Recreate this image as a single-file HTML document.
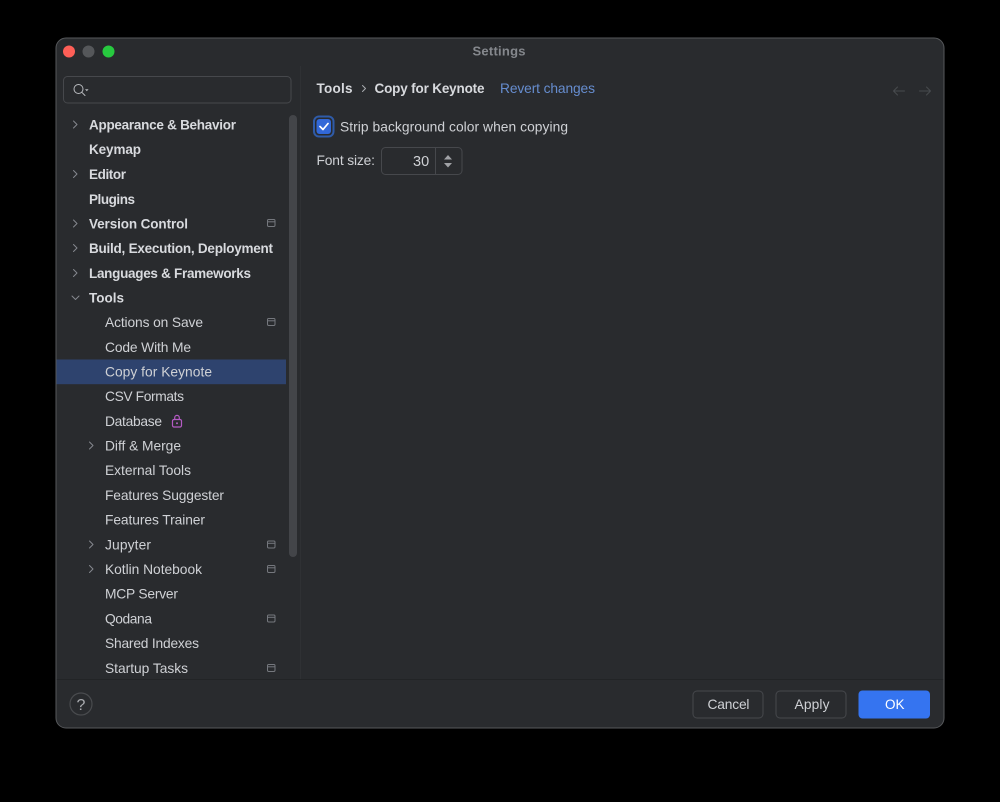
<!DOCTYPE html>
<html><head><meta charset="utf-8"><title>Settings</title>
<style>
html,body{margin:0;padding:0;background:#000;width:1000px;height:802px;overflow:hidden}
svg{display:block}
text{font-family:"Liberation Sans",sans-serif;font-size:13.8px;fill:#cfd1d5}
.b{font-weight:700;font-size:13.5px;fill:#d8dade}
.i{fill:none;stroke:#85888e;stroke-width:1;stroke-linecap:round;stroke-linejoin:round}
#all{filter:blur(0.3px)}
</style></head><body>
<svg width="1000" height="802" viewBox="0 0 1000 802" xmlns="http://www.w3.org/2000/svg">
<rect width="1000" height="802" fill="#000"/>
<g id="all">
<rect x="56" y="38" width="888" height="690" rx="10" fill="#292b2e" stroke="#56585b" stroke-width="1"/>
<circle cx="69" cy="51.500" r="6" fill="#fe5f57"/>
<circle cx="88.500" cy="51.500" r="6" fill="#55575a"/>
<circle cx="108.500" cy="51.500" r="6" fill="#27c93f"/>
<text x="472.500" y="55.500" class="b" textLength="53" style="fill:#85888d;font-size:13px">Settings</text>
<rect x="300" y="66" width="1" height="613" fill="#2f3134"/>
<rect x="56.500" y="679" width="887" height="1" fill="#222426"/>

<rect x="63.500" y="76.500" width="227.500" height="26.500" rx="4" fill="#292b2e" stroke="#46484c"/>
<circle cx="78.500" cy="89" r="4.500" class="i" style="stroke:#b8babe"/><path d="M81.800 92.300L85 95.500" class="i" style="stroke:#b8babe"/>
<path d="M85 89.300h3.600l-1.800 2z" fill="#b8babe"/>

<rect x="289" y="115" width="8" height="442" rx="4" fill="#434549"/>
<rect x="56.500" y="359.500" width="229.500" height="24.700" fill="#2e436e"/>

<g class="i">
<path d="M73.500 121l3.500 3.500-3.500 3.500"/><path d="M73.500 170.500l3.500 3.500-3.500 3.500"/><path d="M73.500 220l3.500 3.500-3.500 3.500"/><path d="M73.500 244.500l3.500 3.500-3.500 3.500"/><path d="M73.500 269.500l3.500 3.500-3.500 3.500"/>
<path d="M72 296l3.500 3.500 3.500-3.500"/>
<path d="M89.500 442l3.500 3.500-3.500 3.500"/><path d="M89.500 541l3.500 3.500-3.500 3.500"/><path d="M89.500 565.500l3.500 3.500-3.500 3.500"/>
</g>

<text x="89" y="129.500" class="b" textLength="147">Appearance &amp; Behavior</text>
<text x="89" y="154" class="b" textLength="52">Keymap</text>
<text x="89" y="179" class="b" textLength="37">Editor</text>
<text x="89" y="204" class="b" textLength="46">Plugins</text>
<text x="89" y="228.500" class="b" textLength="99">Version Control</text>
<text x="89" y="253" class="b" textLength="184">Build, Execution, Deployment</text>
<text x="89" y="278" class="b" textLength="162">Languages &amp; Frameworks</text>
<text x="89" y="302.500" class="b" textLength="35">Tools</text>
<text x="105" y="327" textLength="98">Actions on Save</text>
<text x="105" y="352" textLength="86">Code With Me</text>
<text x="105" y="376.500" textLength="107">Copy for Keynote</text>
<text x="105" y="401" textLength="79">CSV Formats</text>
<text x="105" y="426" textLength="57">Database</text>
<text x="105" y="450.500" textLength="76">Diff &amp; Merge</text>
<text x="105" y="475" textLength="86">External Tools</text>
<text x="105" y="500" textLength="119">Features Suggester</text>
<text x="105" y="524.500" textLength="100">Features Trainer</text>
<text x="105" y="549.500" textLength="46">Jupyter</text>
<text x="105" y="574" textLength="97">Kotlin Notebook</text>
<text x="105" y="598.500" textLength="73">MCP Server</text>
<text x="105" y="623.500" textLength="47">Qodana</text>
<text x="105" y="648" textLength="94">Shared Indexes</text>
<text x="105" y="673" textLength="83">Startup Tasks</text>

<g fill="none" stroke="#75787e" stroke-width="1">
<rect x="267.500" y="219.500" width="7.500" height="7" rx="1.200"/><path d="M267.500 221.800h7.500"/>
<rect x="267.500" y="318.500" width="7.500" height="7" rx="1.200"/><path d="M267.500 320.800h7.500"/>
<rect x="267.500" y="541" width="7.500" height="7" rx="1.200"/><path d="M267.500 543.300h7.500"/>
<rect x="267.500" y="565.500" width="7.500" height="7" rx="1.200"/><path d="M267.500 567.800h7.500"/>
<rect x="267.500" y="615" width="7.500" height="7" rx="1.200"/><path d="M267.500 617.300h7.500"/>
<rect x="267.500" y="664.500" width="7.500" height="7" rx="1.200"/><path d="M267.500 666.800h7.500"/>
</g>
<g fill="none" stroke="#b55bc4" stroke-width="1.200">
<rect x="172.500" y="419.500" width="9" height="7.500" rx="1.500"/>
<path d="M174.700 419.500v-1.800a2.300 2.300 0 0 1 4.600 0v1.800"/>
</g>
<circle cx="177" cy="423.300" r="1" fill="#b55bc4"/>

<text x="316.500" y="93" class="b" textLength="36">Tools</text>
<path d="M362.500 85.500l3 3-3 3" class="i" style="stroke:#aaacb0"/>
<text x="374.500" y="93" class="b" textLength="110">Copy for Keynote</text>
<text x="500" y="93" textLength="95" style="fill:#668dcf">Revert changes</text>

<g class="i" style="stroke:#484b4f">
<path d="M893.500 91h11M897.500 87l-4 4 4 4"/>
<path d="M919.500 91h11M926.500 87l4 4-4 4"/>
</g>

<rect x="314" y="116.500" width="19.500" height="20" rx="5" fill="#292b2e" stroke="#2f5ba8" stroke-width="2"/>
<rect x="316.500" y="119" width="14.500" height="15" rx="3" fill="#3268d8"/>
<path d="M320 126.500l3 3 5-6" fill="none" stroke="#fff" stroke-width="1.700" stroke-linecap="round" stroke-linejoin="round"/>
<text x="340" y="131.500" textLength="228">Strip background color when copying</text>

<text x="316.500" y="165" textLength="58.500">Font size:</text>
<rect x="381.500" y="147.500" width="80.500" height="27" rx="4" fill="#292b2e" stroke="#46484c"/>
<rect x="435" y="148" width="1" height="26" fill="#46484c"/>
<text x="413" y="166" style="font-size:14.500px">30</text>
<path d="M444 159.500l4-4.500 4 4.500zM444 163h8l-4 4.500z" fill="#a0a2a6"/>

<circle cx="81" cy="704" r="11" fill="none" stroke="#494b4e" stroke-width="1.200"/>
<text x="76.500" y="710" style="font-size:16px;fill:#aaacb0">?</text>

<rect x="693" y="691" width="70" height="27" rx="4" fill="#292b2e" stroke="#46484c"/>
<text x="707.500" y="709" textLength="42">Cancel</text>
<rect x="776" y="691" width="70" height="27" rx="4" fill="#292b2e" stroke="#46484c"/>
<text x="794.500" y="709" textLength="35">Apply</text>
<rect x="858.500" y="690.500" width="71.500" height="28" rx="4" fill="#3574f0"/>
<text x="885" y="709" style="fill:#fff;font-size:13.500px">OK</text>
</g>
</svg>
</body></html>
